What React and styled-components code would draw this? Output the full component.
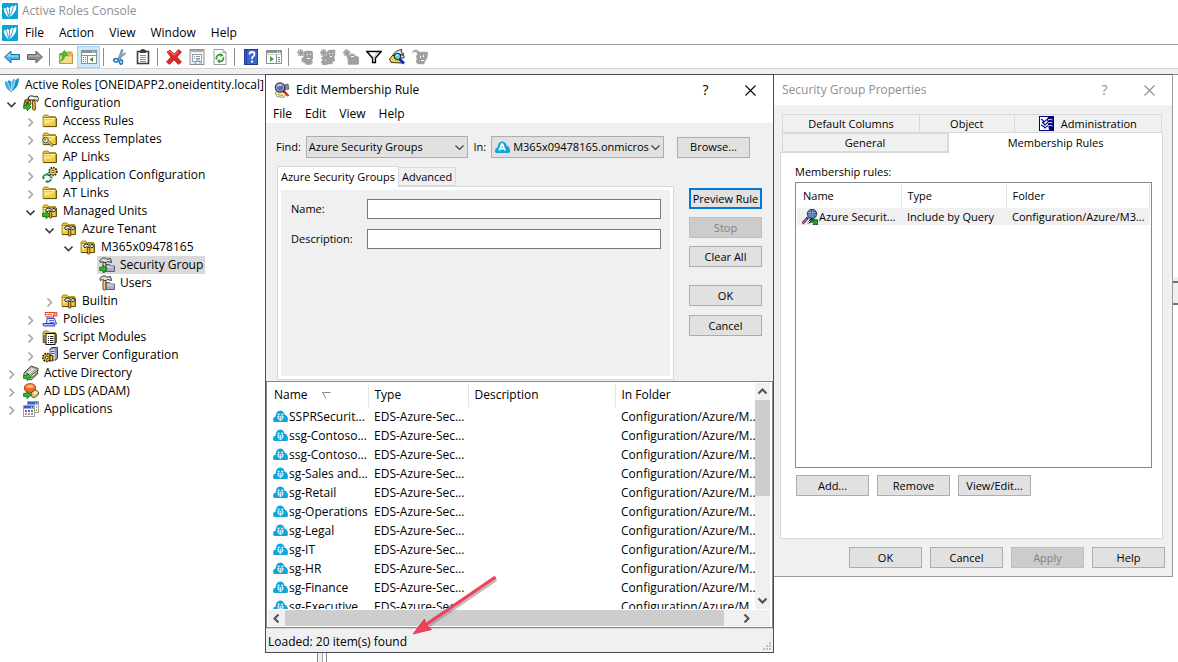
import React from "react";
import styled, { createGlobalStyle, css } from "styled-components";

const Global = createGlobalStyle`
  * { box-sizing: border-box; }
  html, body { margin: 0; padding: 0; }
  body { background: #fff; color: #000; font-family: "Open Sans", "Noto Sans", sans-serif; font-size: 12px; line-height: 16px; }
  svg { display: block; flex: none; }
`;

const uiFont = css`
  font-family: "Open Sans", "Noto Sans", sans-serif;
  font-size: 12px;
  line-height: 16px;
`;
const dialogFont = css`
  font-family: "Open Sans", "Noto Sans", sans-serif;
  font-size: 11px;
  line-height: 16px;
`;

/* ---------- icons ---------- */

const Icon = ({ w = 16, h = 16, children, box }) => (
  <svg width={w} height={h} viewBox={box || `0 0 ${w} ${h}`} aria-hidden="true">
    {children}
  </svg>
);

const AppLogo = () => (
  <Icon>
    <rect width="16" height="16" rx="1" fill="#08a4d8" />
    <path d="M1.800 5 L4 5.500 L5.500 3.800 L7.500 5.500 L10.200 2.600 L11.200 3.800 L14.400 1.800 Q15 10 6.800 14.500 Q1.800 11 1.800 5 Z" fill="#fff" />
    <path d="M4 5.500 Q5.500 8 6.500 13.500 M7.600 5.500 Q7.800 9 6.800 13.500 M11.200 3.800 Q10.500 9 7 14" fill="none" stroke="#08a4d8" strokeWidth="0.900" />
  </Icon>
);

const RootIcon = () => (
  <Icon>
    <path d="M1 4.500 L3.500 5 L4.800 3 L7.300 5 L10 2 L11.200 3.300 L15 1 Q15.500 10 7 15 Q1 11.500 1 4.500 Z" fill="#1b90c8" />
    <path d="M1 4.500 L3.500 5 Q5.500 8 6.500 14.500 Q1.200 10.500 1 4.500 Z" fill="#3fb0df" />
    <path d="M7.500 5 L10 2 L11.200 3.300 Q10.500 9 7 14 Z" fill="#5cc0e6" />
    <path d="M3.500 5 Q5.500 8 6.700 14 M7.400 5 Q7.700 9 6.900 14 M11.200 3.300 Q10.500 9 7.200 14" fill="none" stroke="#d8f1fa" strokeWidth="0.700" />
  </Icon>
);

const BackArrow = () => (
  <Icon>
    <path d="M0.500 8 L7 2 V5.500 H15.500 V10.500 H7 V14 Z" fill="#4cb2ea" stroke="#1d6fa8" />
    <path d="M2.500 7.600 L6.300 4 V6.500 H14.500 V7.800 Z" fill="#9bdaf8" />
  </Icon>
);
const ForwardArrow = () => (
  <Icon>
    <path d="M15.500 8 L9 2 V5.500 H0.500 V10.500 H9 V14 Z" fill="#8d8d8d" stroke="#646464" />
    <path d="M1.500 6.500 H10 V4.500 L13.500 7.700 H1.500 Z" fill="#b3b3b3" />
  </Icon>
);
const UpFolder = () => (
  <Icon>
    <path d="M1.500 4.500 H8 L9 3 H13.500 L14.500 4.500 V14.500 H1.500 Z" fill="#e0b955" stroke="#c0973a" />
    <path d="M2 7.500 H14 V14 H2 Z" fill="#f3d98a" />
    <path d="M2.200 12.500 Q6.500 11 7 6.500 H9.800 L6.500 1.200 L2.500 5.800 H4.800 Q5 9.500 2.200 12.500 Z" fill="#45c232" stroke="#2a8a20" strokeWidth="0.500" />
  </Icon>
);
const TreeToggle = () => (
  <Icon>
    <rect x="0.500" y="1.500" width="15" height="13" fill="#fff" stroke="#8b9097" />
    <rect x="1" y="2" width="14" height="2" fill="#8b9097" />
    <path d="M11 3 H14" stroke="#fff" strokeDasharray="1 1" />
    <path d="M1 6.500 H15" stroke="#8b9097" />
    <path d="M2 8.500 H5 M2 10.500 H5 M2 12.500 H5" stroke="#4f7fb5" strokeDasharray="1 1" />
    <path d="M6.500 7 V14" stroke="#8b9097" />
    <path d="M12 8 V13 L8.500 10.500 Z" fill="#2f9e3a" />
  </Icon>
);
const PaneToggle = () => (
  <Icon>
    <rect x="0.500" y="1.500" width="15" height="13" fill="#fff" stroke="#8b9097" />
    <rect x="1" y="2" width="14" height="2" fill="#8b9097" />
    <path d="M11 3 H14" stroke="#fff" strokeDasharray="1 1" />
    <path d="M1 5.500 H15" stroke="#c6c9cd" />
    <path d="M10.500 6 V14" stroke="#8b9097" />
    <path d="M12 8.500 H14 M12 10.500 H14 M12 12.500 H14" stroke="#4f7fb5" />
    <path d="M4 7 V13 L8 10 Z" fill="#3fae35" />
  </Icon>
);
const Scissors = () => (
  <Icon>
    <path d="M9.500 0.500 L11 1 L8.500 10 L6.500 9 Z" fill="#8fb0c8" stroke="#4f6f88" strokeWidth="0.600" />
    <path d="M13.500 4 L6 10" stroke="#7f9db4" strokeWidth="1.800" />
    <ellipse cx="4" cy="11.300" rx="2.200" ry="1.700" fill="none" stroke="#1f7fd0" strokeWidth="1.700" />
    <ellipse cx="9" cy="13" rx="1.500" ry="2.200" fill="none" stroke="#1f7fd0" strokeWidth="1.700" />
  </Icon>
);
const Clipboard = () => (
  <Icon>
    <rect x="2.500" y="2.500" width="11" height="12" fill="#fff" stroke="#3f3f3f" strokeWidth="1.600" />
    <rect x="5" y="1" width="6" height="3" fill="#3f3f3f" />
    <rect x="6.500" y="0" width="3" height="2" fill="#3f3f3f" />
    <path d="M5 6.500 H11 M5 8.500 H11 M5 10.500 H11 M5 12.500 H11" stroke="#8d8d8d" />
  </Icon>
);
const DeleteX = () => (
  <Icon>
    <path d="M1 3 L4 1 L8 5 L12.500 0.500 L15.500 3 L11 8 L15.500 13 L12.500 15.500 L8 11 L3.500 15.500 L0.500 13 L5 8 Z" fill="#dc2a2a" stroke="#a51616" strokeWidth="0.700" />
    <path d="M2.500 3 L4 2.300 L8 6.300 L12.500 2" stroke="#f38a80" fill="none" />
  </Icon>
);
const Properties = () => (
  <Icon>
    <rect x="1" y="0.500" width="14" height="15" fill="#f1f3f5" stroke="#8b9097" />
    <rect x="1.500" y="1" width="13" height="2" fill="#a9adb2" />
    <rect x="3.500" y="5.500" width="9" height="7" fill="#fff" stroke="#9aa0a8" />
    <path d="M5 7.500 H6 M5 9.500 H6 M7 7.500 H11 M7 9.500 H11 M7 11 H11" stroke="#7f93a8" />
    <path d="M5 14 H8 M10 14 H13" stroke="#7ba6cf" />
  </Icon>
);
const Refresh = () => (
  <Icon>
    <path d="M2 0.500 H11 L14 3.500 V15.500 H2 Z" fill="#fff" stroke="#9b9b9b" />
    <path d="M11 0.500 V3.500 H14" fill="none" stroke="#9b9b9b" />
    <path d="M4.800 10.500 A3.400 3.400 0 0 1 9 5.800" fill="none" stroke="#35a52d" strokeWidth="1.800" />
    <path d="M8.500 3.500 L11.500 6.500 L8 8 Z" fill="#35a52d" />
    <path d="M11.300 8 A3.400 3.400 0 0 1 7.200 12.300" fill="none" stroke="#35a52d" strokeWidth="1.800" />
    <path d="M8 10 L4.800 12 L8 14.500 Z" fill="#35a52d" />
  </Icon>
);
const HelpBook = () => (
  <Icon>
    <rect x="1.500" y="0.500" width="13" height="15" fill="#3b67cf" stroke="#1d3e96" />
    <path d="M3.500 1 V15" stroke="#1d3e96" />
    <path d="M6.500 5.500 Q6.500 3 9 3 Q11.500 3 11.500 5.200 Q11.500 6.700 10 7.600 Q9 8.200 9 10" fill="none" stroke="#fff" strokeWidth="1.800" />
    <rect x="8" y="11.500" width="2" height="2" fill="#fff" />
  </Icon>
);
const GhostStar = () => (
  <path d="M3 0 H4 V2 L6 1 L5.500 3 L7.500 3 V4 H6 V5 L7 7 L5 6 L4 7 H3 V5.500 L1 7 L2 4.500 L0 4 V3 H2 L1 1 L3 2 Z" />
);
const GhostUser = ({ kind }) => (
  <Icon>
    <g fill="#a0a0a0" stroke="#a0a0a0" strokeWidth="0.500">
      {kind !== "edit" && <GhostStar />}
      {kind === "user" && <path d="M7 4 L8 2 H15 L16 4 V10 L14 11 L16 13 L14 15.500 H9 L7 13 H5 V9 L7 8 Z" />}
      {kind === "group" && <path d="M7 3 L9 1 H15 L15 6 L14 8 L15 12 L13 12 L12 15 H8 L6 16 H3 L1 13 L3 11 L1 9 L4 7 L7 7 Z" />}
      {kind === "folder" && <path d="M4 7 L7 6 L8 5 H11 L12 7 H14 L16 9 V15 L14 15.500 H5 V12 Z" />}
      {kind === "edit" && <path d="M4 7 L8 3 H15 L16 4 L15 9 L13 12 L12 15 H6 L4 13 L5 10 Z M1 3 L2 1 H5 V2 H7 V5 H5 L5 3 H3 L2 2 L1 4 H0 Z" />}
    </g>
    <g fill="#fff">
      {kind === "user" && <path d="M10 5 H11 V6 H10 Z M13 5 H14 V6 H13 Z M10 9 H13 V10 H10 Z" />}
      {kind === "group" && <path d="M9 4 H10 V5 H9 Z M12 4 H13 V5 H12 Z M5 11 H6 V12 H5 Z M10 7 H12 V8 H10 Z" />}
      {kind === "folder" && <path d="M8 7 H11 V8 H8 Z" />}
      {kind === "edit" && <path d="M8 7 H9 V9 H8 Z M11 6 H12 V8 H11 Z M9 11 H12 V12 H9 Z" />}
    </g>
  </Icon>
);
const Funnel = () => (
  <Icon>
    <path d="M0.700 2.500 H15.300 L9.500 9 V13.500 L6.500 13.500 V9 Z" fill="#d8d8d8" stroke="#000" strokeWidth="1.300" />
    <path d="M3 3.500 H10 L7.500 7.500 Z" fill="#fff" />
  </Icon>
);
const FindIcon = () => (
  <Icon>
    <path d="M0.500 10 L4 6 L12 10 L13 14 L2 13.500 Z" fill="#e8d43c" stroke="#222" strokeWidth="0.900" />
    <path d="M4 6 Q6 1.500 13 0.500 L12 3 L15 5 L11 5.500 L15 6.500 V9 L9 9 Z" fill="#e8e8e8" stroke="#222" strokeWidth="0.900" />
    <circle cx="8.500" cy="7.500" r="3.200" fill="#58d7dc" stroke="#111" />
    <path d="M10.500 10 L15 14.500" stroke="#1822c8" strokeWidth="2.600" />
    <path d="M7 6.800 L9 5.800" stroke="#fff" />
  </Icon>
);
const QueryIcon = () => (
  <Icon>
    <path d="M1 11 L6 8 L13 11 L10 15.500 L3 14.500 Z" fill="#f4eda0" stroke="#77736a" strokeWidth="0.700" />
    <path d="M4 12.500 L9 13.500" stroke="#a29a60" />
    <path d="M10 3 L14 2 L15 7 L11 8 Z" fill="#8b8b95" stroke="#444" strokeWidth="0.600" />
    <circle cx="6" cy="5.500" r="4.600" fill="#b4bfe4" stroke="#2d3159" strokeWidth="1.300" />
    <circle cx="6" cy="5.800" r="3" fill="#5c6aa6" />
    <path d="M4 4.500 Q5 3 7 3.300" stroke="#fff" fill="none" />
    <path d="M9.500 9 L14.500 14" stroke="#c93028" strokeWidth="2.400" />
    <path d="M9 8.500 L10.500 10" stroke="#333" strokeWidth="2" />
  </Icon>
);
const RuleIcon = () => (
  <Icon>
    <path d="M0.500 14.500 L6 8.500" stroke="#3a2f6a" strokeWidth="2.600" />
    <path d="M0.800 14.200 L5 9.800" stroke="#f2744e" strokeWidth="1.100" />
    <circle cx="10" cy="5" r="4.700" fill="#3c6ea5" stroke="#12306a" />
    <path d="M6 3.500 H14 M5.500 6 H14.500 M8 1 V9 M11 1 V9" stroke="#cfe3f2" strokeWidth="0.700" strokeDasharray="1 1" />
    <path d="M5 15 L8 10 H11 L13 12" fill="#0a0a0a" />
    <path d="M5.500 14.500 L8.500 11.500 L10 13" fill="none" stroke="#fff" />
    <path d="M9 10 L12 11.500 V10.500 L16 11 V16 H11 L12 14 L9 12.500 Z" fill="#0fae2a" stroke="#06380d" strokeWidth="0.700" />
  </Icon>
);

const GreenArrow = () => (
  <path d="M0.600 10.300 H4 V8 L8.200 12 L4 15.700 V13.600 H0.600 Z" fill="#1fc21f" stroke="#0a5a0a" strokeWidth="0.700" />
);
const FolderBase = () => (
  <>
    <path d="M1 3.500 L2 2 H6 L7 3.500 H13.500 V5 H1 Z" fill="#e8c83c" stroke="#9a7a14" strokeWidth="0.800" />
    <path d="M1 4.500 H14 V13.500 H1 Z" fill="#efce42" stroke="#9a7a14" strokeWidth="0.800" />
    <path d="M1.800 5.500 H13.200" stroke="#fff3a8" />
    <path d="M2 7 Q8 8 12 5.800 V7.500 Q8 10.500 2 10.500 Z" fill="#f9e67e" />
    <path d="M1.500 13.600 H14.400 V5" fill="none" stroke="#5f4a08" />
  </>
);
const HammerGlyph = () => (
  <>
    <path d="M3.500 7 Q4.500 4.500 7 5 L8 6 H11 L12.500 5 L13.500 7.500 L12 9 L10.500 8 H6.500 L5 9 Z" fill="#e4e4e4" stroke="#111" strokeWidth="0.900" />
    <path d="M7.300 8.500 H9.800 V14.500 Q8.600 16 7.300 14.500 Z" fill="#f6b21c" stroke="#3b2500" strokeWidth="0.800" />
  </>
);
const FolderIcon = () => <Icon><FolderBase /></Icon>;
const FolderKey = () => (
  <Icon>
    <FolderBase />
    <circle cx="3.500" cy="9" r="2.800" fill="#f3e9a8" stroke="#57503a" />
    <circle cx="3" cy="8.500" r="0.900" fill="#57503a" />
    <path d="M5.500 10.500 L11 15" stroke="#57503a" strokeWidth="2.600" />
    <path d="M5.500 10.500 L10.600 14.600" stroke="#e8dea0" strokeWidth="1.200" />
  </Icon>
);
const FolderTool = () => <Icon><FolderBase /><HammerGlyph /></Icon>;
const FolderToolArrow = () => <Icon><FolderBase /><HammerGlyph /><GreenArrow /></Icon>;
const ConfigIcon = () => (
  <Icon>
    <path d="M1 9 L2 5 L7 3.500 L8 9 L5 12 L1.500 11 Z" fill="#c9a42c" stroke="#3d3108" strokeWidth="0.900" />
    <path d="M2.500 6.500 L6 9 M6 5 L3.500 9.500" stroke="#3d3108" />
    <path d="M5 2.500 Q7 0 10 1 L12 2 L14 1 L15.500 3.500 L14.500 6.500 L12.500 5 H8.500 L6 5 Z" fill="#f2f2f2" stroke="#111" strokeWidth="0.900" />
    <path d="M9.500 5.500 H12 L12.500 14.500 Q11 16 9.700 14.500 Z" fill="#f8b824" stroke="#3b2500" strokeWidth="0.800" />
    <GreenArrow />
  </Icon>
);
const AppConfigIcon = () => (
  <Icon>
    <circle cx="11" cy="4.500" r="3.800" fill="#f1cf54" stroke="#222" strokeWidth="1.800" strokeDasharray="1.500 1" />
    <circle cx="11" cy="4.500" r="1.200" fill="#fff" stroke="#222" strokeWidth="0.700" />
    <path d="M5 7 L8 9" stroke="#222" strokeWidth="1.400" />
    <path d="M1 11 A4 4 0 0 1 5 7.500 M9 12 A4 4 0 0 1 4.500 14.800" fill="none" stroke="#1e8f4b" strokeWidth="1.600" />
    <path d="M0 10 L3 10 L1.500 13 Z M7.500 11 L11 11.500 L9 8.500 Z M4.500 5.500 L7.500 7.500 L4.500 9 Z M5.500 12.800 L3 14.500 L5.500 16 Z" fill="#1e8f4b" />
  </Icon>
);
const ToolGroup = ({ arrow }) => (
  <Icon>
    <path d="M7 7.500 H10.500 L11.500 9 H15.500 V14.500 H7 Z" fill="#a9b0c6" stroke="#4f566b" strokeWidth="0.900" />
    <path d="M8 10 H14.500" stroke="#e8ebf4" />
    <path d="M0.800 3.500 Q3 0 6.500 1 L8 2.200 L11.500 1.500 L12.500 5.500 L8.500 4.500 L6.500 6 L3.500 4.500 L1.500 5.500 Z" fill="#dcdcdc" stroke="#222" strokeWidth="0.900" />
    <path d="M4 5.500 H6.800 V14.500 Q5.400 15.800 4 14.500 Z" fill={arrow ? "#d0d0d0" : "#f8d060"} stroke="#3b2a10" strokeWidth="0.800" />
    {arrow && <GreenArrow />}
  </Icon>
);
const ToolGroupArrow = () => <ToolGroup arrow />;
const PolicyIcon = () => (
  <Icon>
    <path d="M3 1.500 H12 L13 3 L11.500 4 V7 H5 L3.500 4.500 Z" fill="#fde6dc" stroke="#e5482c" />
    <path d="M12 1.500 H15 V5 H12 Z" fill="#f7a586" stroke="#e5482c" strokeWidth="0.900" />
    <path d="M4.500 3.500 H10 M5 5.500 H10.500" stroke="#e5482c" strokeWidth="0.800" />
    <path d="M5 7.500 H12.500 L14.500 13 H4.500 Z" fill="#e6ebff" stroke="#3948b8" />
    <path d="M7 9.500 H12 M7.500 11.500 H12.500" stroke="#5c6bd3" />
    <path d="M1 12.500 H11.500 L13 15 H2.500 Q0.500 15 1 12.500 Z" fill="#aebaf4" stroke="#3948b8" />
  </Icon>
);
const ScriptIcon = () => (
  <Icon>
    <FolderBase />
    <rect x="4" y="4.500" width="9" height="11" fill="#fff" stroke="#111" />
    <path d="M6 7.500 H7 M8 7.500 H11.500 M6 9.500 H7 M8 9.500 H11.500 M6 11.500 H7 M8 11.500 H11.500 M6 13.500 H7 M8 13.500 H11.500" stroke="#222" />
    <path d="M2 6 V13" stroke="#222" />
  </Icon>
);
const ServerIcon = () => (
  <Icon>
    <path d="M8 2 L10 0.500 H15.500 V11.500 L14 13 H8 Z" fill="#9097b5" stroke="#2b2e45" strokeWidth="0.900" />
    <path d="M8.500 2.500 H13 V12.500 H8.500 Z" fill="#d7daea" />
    <path d="M9 4.500 H12.500 M9 6.500 H12.500" stroke="#4b5070" />
    <circle cx="4.800" cy="10.500" r="3.900" fill="#f0c838" stroke="#1b1600" strokeWidth="1.800" strokeDasharray="1.600 1" />
    <circle cx="4.800" cy="10.500" r="1.500" fill="#fff" stroke="#1b1600" strokeWidth="0.900" />
    <path d="M8 8 L11 9 L10.500 14 H8 Z" fill="#f0c838" stroke="#1b1600" strokeWidth="0.900" />
  </Icon>
);
const DirectoryIcon = () => (
  <Icon>
    <path d="M1 8 L8 1 L15 3.500 V6 L14 7 L15 8.500 L8 15 L1 12 Z" fill="#d4d6cc" stroke="#30342a" strokeWidth="0.900" />
    <path d="M2.500 7.700 L8.500 2.200 L13.500 4 L7.500 9.500 Z" fill="#f4f4ee" stroke="#666b5c" strokeWidth="0.700" />
    <path d="M4.500 7 L9.500 3.500 M6.500 8 L11.500 4.500" stroke="#9a9d92" strokeWidth="0.800" />
    <path d="M8 10.500 L15 5 M8 13 L15 7.500" stroke="#30342a" strokeWidth="0.800" />
    <path d="M10 11 L13.500 8" stroke="#d7bf3c" />
    <GreenArrow />
  </Icon>
);
const LdsIcon = () => (
  <Icon>
    <path d="M1.500 3 L5 0.700 H9.500 L12.500 3 V7 L9.500 10 H4.500 L1.500 7 Z" fill="#f26a2a" stroke="#a83a0c" strokeWidth="0.800" />
    <path d="M2.500 3.500 L6 1.700 H9 L11.500 3.500 L9 5 H5 Z" fill="#fbb68a" />
    <path d="M8 10 L12 6.500 L15.500 9 V11.500 L11 15 L8 13 Z" fill="#dcc25a" stroke="#3d3108" strokeWidth="0.800" />
    <path d="M10 10 L12.500 8 L14.500 9.300 L11.500 12 Z" fill="#f3f0e0" />
    <GreenArrow />
  </Icon>
);
const AppsIcon = () => (
  <Icon>
    <rect x="4.500" y="0.500" width="11" height="11" fill="#fff" stroke="#a0a0a0" />
    <rect x="5" y="1" width="10" height="2.500" fill="#3a5ad0" />
    <path d="M12 2.200 H13 M14 2.200 H15" stroke="#fff" />
    <rect x="0.500" y="4.500" width="11" height="11" fill="#fff" stroke="#a0a0a0" />
    <rect x="1" y="5" width="10" height="2.500" fill="#3a5ad0" />
    <path d="M8 6.200 H9 M10 6.200 H11" stroke="#fff" />
    <rect x="2" y="9" width="2" height="2" fill="#d34a3a" />
    <rect x="5" y="9" width="2" height="2" fill="#4b68d8" />
    <rect x="8" y="9" width="2" height="2" fill="#48a04c" />
    <rect x="2" y="12" width="2" height="2" fill="#9a9a9a" />
    <rect x="5" y="12" width="2" height="2" fill="#9a9a9a" />
    <rect x="8" y="12" width="2" height="2" fill="#9a9a9a" />
    <path d="M13.500 5 V10" stroke="#c7a33c" strokeDasharray="2 1" />
  </Icon>
);
const CloudPath = () => (
  <path d="M1.500 12 Q0 12 0 9.800 Q0 7.200 2.600 6.600 Q3 0.500 7.200 0.500 Q10.500 0.500 11.600 4.500 Q14.600 5.500 14.900 8.500 V10.500 Q14.900 12 13.500 12 Z" fill="#0ba6dc" />
);
const CloudGroupIcon = () => (
  <Icon w={15} h={13}>
    <CloudPath />
    <g fill="#d9f3fc">
      <circle cx="5.600" cy="4.500" r="1.100" />
      <circle cx="9.200" cy="4.500" r="1.100" />
      <path d="M4.300 6 H6 V9.500 H5 Z M8.900 6 H10.600 L10 9.500 H8.900 Z" />
      <circle cx="7.450" cy="6.700" r="1" />
      <path d="M6.300 8 H8.600 L8.300 11 H6.600 Z" />
    </g>
  </Icon>
);
const CloudTenantIcon = () => (
  <Icon w={15} h={13}>
    <CloudPath />
    <path d="M4.200 9.500 L6.700 3.200 H7.500 L10 9.500 M5.300 7.600 H8.900" fill="none" stroke="#fff" strokeWidth="1.700" />
  </Icon>
);
const AdminTabIcon = () => (
  <Icon w={15} h={15}>
    <rect width="15" height="15" fill="#000080" />
    <path d="M1 1 H9 L8 3 L10 14 H1 Z" fill="#fff" />
    <path d="M2 3 Q4 4 5 6 Q8 2 13 4 M3 6 Q5 7 6 9 Q9 5 13 7 M2 9 Q5 10 6 12 Q9 8 13 10" fill="none" stroke="#000080" strokeWidth="1.100" />
    <path d="M9 4 Q11 2.500 13.500 4 M9 7 Q11 5.500 13.500 7 M9 10 Q11 8.500 13.500 10" fill="none" stroke="#fff" strokeWidth="0.900" />
  </Icon>
);
const Chevron = ({ dir = "down", color = "#404040", size = 9, thick = 2 }) => {
  const d = {
    down: "M0.500 2.500 L4.500 6.500 L8.500 2.500",
    up: "M0.500 6.500 L4.500 2.500 L8.500 6.500",
    right: "M2.500 0.500 L6.500 4.500 L2.500 8.500",
    left: "M6.500 0.500 L2.500 4.500 L6.500 8.500",
  }[dir];
  return (
    <Icon w={size} h={size} box="0 0 9 9">
      <path d={d} fill="none" stroke={color} strokeWidth={thick} />
    </Icon>
  );
};
const CrossIcon = () => (
  <Icon w={11} h={11}>
    <path d="M0.500 0.500 L10.500 10.500 M10.500 0.500 L0.500 10.500" stroke="currentColor" strokeWidth="1.100" />
  </Icon>
);

/* ---------- console window ---------- */

const Desktop = styled.div`
  position: relative;
  display: flex;
  flex-direction: column;
  min-height: 100vh;
  overflow: hidden;
  background: #fff;
`;
const ConsoleTitle = styled.header`
  display: flex;
  align-items: center;
  gap: 4px;
  height: 22px;
  padding-left: 2px;
  color: #8f8f8f;
`;
const MenuBar = styled.nav`
  display: flex;
  align-items: center;
  gap: ${(p) => p.$gap}px;
  height: ${(p) => p.$height}px;
  padding-left: ${(p) => p.$inset}px;
`;
const MenuButton = styled.button`
  ${uiFont}
  border: 0;
  padding: 0;
  background: none;
  color: #000;
`;
const MenuLogo = styled.span`
  margin-right: -8px;
`;
const ToolBar = styled.div`
  display: flex;
  align-items: center;
  height: 24px;
  border-top: 1px solid #9d9d9d;
  background: #fff;
`;
const ToolButton = styled.button`
  display: flex;
  align-items: center;
  justify-content: center;
  width: 23px;
  height: 22px;
  padding: 0;
  border: 1px solid ${(p) => (p.$active ? "#99d1ff" : "transparent")};
  background: ${(p) => (p.$active ? "#cce8ff" : "transparent")};
`;
const ToolDivider = styled.span`
  width: 1px;
  height: 18px;
  margin: 0 4px 0 3px;
  background: #8d8d8d;
`;
const ToolEdge = styled.div`
  height: 6px;
  border-top: 1px solid #d5d5d5;
  background: #f0f0f0;
`;
const Workspace = styled.main`
  display: flex;
  flex: 1;
`;
const TreePane = styled.ul`
  width: 318px;
  margin: 0;
  padding: 1px 0 0;
  list-style: none;
  border-top: 1px solid #828790;
  border-right: 1px solid #828790;
`;
const TreeRow = styled.li`
  display: flex;
  align-items: center;
  height: 18px;
  padding-left: ${(p) => 2 + 19 * Math.max(0, p.$depth - 1)}px;
`;
const TreeSlot = styled.span`
  display: flex;
  align-items: center;
  justify-content: center;
  width: 19px;
  padding-top: 2px;
`;
const TreeItem = styled.span`
  display: flex;
  align-items: center;
  gap: 5px;
  height: 18px;
  padding: 0 2px;
  white-space: nowrap;
  background: ${(p) => (p.$selected ? "#d9d9d9" : "transparent")};
`;
const Splitter = styled.div`
  width: 5px;
  background: #f0f0f0;
  border-right: 1px solid #a8a8a8;
`;
const ResultPane = styled.section`
  flex: 1;
  display: flex;
  flex-direction: column;
  margin-left: 3px;
  border-top: 1px solid #828790;
  border-left: 1px solid #828790;
`;
const ResultTop = styled.div`
  height: 202px;
`;
const ResultBand = styled.div`
  height: 28px;
  border-top: 4px solid #f0f0f0;
  border-bottom: 2px solid #6f7278;
  background: #f0f0f0;
  box-shadow: inset 0 2px #6f7278;
`;

/* ---------- dialogs ---------- */

const RuleWindow = styled.section`
  position: absolute;
  top: 74px;
  left: 265px;
  right: 404px;
  z-index: 2;
  display: flex;
  flex-direction: column;
  height: 579px;
  border: 1px solid #4b4d52;
  background: #f0f0f0;
`;
const PropsWindow = styled.section`
  position: absolute;
  top: 74px;
  right: 5px;
  width: 400px;
  z-index: 1;
  display: flex;
  flex-direction: column;
  border: 1px solid #9a9a9a;
  border-top-color: #5b5b5f;
  background: #f0f0f0;
`;
const WindowTitle = styled.header`
  display: flex;
  align-items: center;
  gap: 6px;
  height: 30px;
  padding: 0 3px 0 8px;
  background: #fff;
  color: ${(p) => (p.$inactive ? "#8f8f8f" : "#000")};
`;
const TitleText = styled.h1`
  flex: 1;
  margin: 0;
  font-size: 12px;
  font-weight: 400;
  line-height: 16px;
`;
const TitleButton = styled.button`
  ${uiFont}
  display: flex;
  align-items: center;
  justify-content: center;
  width: 39px;
  height: 28px;
  padding: 0;
  border: 0;
  background: none;
  font-size: 14px;
  color: inherit;
`;
const WhiteStrip = styled.div`
  background: #fff;
`;
const FindRow = styled.div`
  ${dialogFont}
  display: flex;
  align-items: center;
  gap: 5px;
  padding: 13px 23px 0 10px;
`;
const FieldLabel = styled.label`
  ${dialogFont}
  flex: none;
  width: ${(p) => (p.$width ? `${p.$width}px` : "auto")};
  white-space: nowrap;
`;
const SelectBox = styled.span`
  display: grid;
  align-items: center;
  flex: ${(p) => p.$grow} 1 0;
  min-width: 0;
  > * { grid-area: 1 / 1; }
  > svg:last-child { justify-self: end; margin-right: 4px; pointer-events: none; }
`;
const SelectIcon = styled.span`
  z-index: 1;
  margin-left: 4px;
  pointer-events: none;
`;
const Select = styled.select`
  ${dialogFont}
  appearance: none;
  width: 100%;
  height: 22px;
  padding: 0 14px 0 ${(p) => p.$inset}px;
  border: 1px solid #adadad;
  border-radius: 0;
  background: #e1e1e1;
  color: #000;
`;
const PushButton = styled.button`
  ${dialogFont}
  flex: none;
  width: 73px;
  height: 21px;
  padding: 0;
  border: ${(p) => (p.$default ? "2px solid #0078d7" : "1px solid #adadad")};
  background: #e1e1e1;
  color: #000;
  white-space: nowrap;
  &:disabled { background: #cccccc; border-color: #bfbfbf; color: #838383; }
`;
const BrowseSpace = styled.span`
  margin-left: 8px;
`;
const QueryArea = styled.div`
  display: flex;
  gap: 15px;
  padding: 8px 11px 1px 11px;
`;
const QueryTabs = styled.div`
  flex: 1;
  display: flex;
  flex-direction: column;
  min-width: 0;
`;
const TabStrip = styled.div`
  display: flex;
  align-items: flex-end;
`;
const Tab = styled.button`
  ${dialogFont}
  display: flex;
  align-items: center;
  justify-content: center;
  gap: 7px;
  flex: ${(p) => p.$flex || "none"};
  height: ${(p) => (p.$active ? 21 : 19)}px;
  margin-bottom: ${(p) => (p.$active ? "-1px" : "0")};
  padding: 0 3px;
  border: 1px solid #d9d9d9;
  border-bottom-width: ${(p) => (p.$active ? 0 : 1)}px;
  border-left-width: ${(p) => (p.$joined ? 0 : 1)}px;
  background: ${(p) => (p.$active ? "#fff" : "#f0f0f0")};
  color: #000;
  white-space: nowrap;
  z-index: ${(p) => (p.$active ? 1 : 0)};
`;
const QueryPanel = styled.div`
  display: flex;
  flex-direction: column;
  gap: 10px;
  height: 194px;
  padding: 12px 9px 0;
  border: 1px solid #d9d9d9;
  background: #f0f0f0;
  box-shadow: inset 0 0 0 3px #fff;
`;
const FormRow = styled.div`
  display: flex;
  align-items: center;
  padding: 0 3px 0 4px;
`;
const TextInput = styled.input`
  ${dialogFont}
  flex: 1;
  min-width: 0;
  height: 20px;
  padding: 0 4px;
  border: 1px solid #7a7a7a;
  background: #fff;
`;
const ActionColumn = styled.div`
  display: flex;
  flex-direction: column;
  gap: 8px;
  padding-top: 22px;
`;
const ActionPair = styled.div`
  display: flex;
  flex-direction: column;
  gap: 9px;
  margin-top: 10px;
`;

const ResultFrame = styled.div`
  display: grid;
  grid-template-columns: minmax(0, 1fr) 15px;
  grid-template-rows: minmax(0, 1fr) 17px;
  flex: 1;
  min-height: 0;
  padding: 1px 2px 1px 1px;
  border: 1px solid #828790;
  background: #fff;
`;
const ListClip = styled.div`
  overflow: hidden;
`;
const DataTable = styled.table`
  width: 100%;
  border-collapse: collapse;
  border-spacing: 0;
  table-layout: fixed;
`;
const HeadCell = styled.th`
  ${(p) => (p.$small ? dialogFont : uiFont)}
  height: 24px;
  width: ${(p) => (p.$width ? `${p.$width}px` : "auto")};
  padding: 0 0 0 6px;
  border-right: ${(p) => (p.$last ? "0" : "1px solid #e5e5e5")};
  font-weight: 400;
  text-align: left;
  white-space: nowrap;
`;
const HeadLabel = styled.span`
  display: flex;
  align-items: center;
  gap: 14px;
`;
const Cell = styled.td`
  ${(p) => (p.$small ? dialogFont : uiFont)}
  height: ${(p) => (p.$small ? 17 : 19)}px;
  padding: 0 0 0 6px;
  overflow: hidden;
  white-space: nowrap;
  background: ${(p) => (p.$shade ? "#f0f0f0" : "transparent")};
`;
const CellName = styled.span`
  display: flex;
  align-items: center;
  gap: 1px;
  margin-left: -1px;
`;
const ScrollRail = styled.div`
  display: flex;
  flex-direction: ${(p) => (p.$vertical ? "column" : "row")};
  background: #f0f0f0;
  ${(p) => !p.$vertical && css`
    margin-top: 1px;
    grid-column: 1;
  `}
`;
const RailArrow = styled.span`
  display: flex;
  align-items: center;
  justify-content: center;
  flex: none;
  width: ${(p) => (p.$wide ? 17 : 15)}px;
  height: ${(p) => (p.$wide ? 16 : 17)}px;
`;
const RailTrack = styled.span`
  display: flex;
  flex-direction: inherit;
  flex: 1;
`;
const RailThumb = styled.span`
  flex: 0 0 ${(p) => p.$share}%;
  background: #cdcdcd;
`;
const RailCorner = styled.span`
  margin-top: 1px;
  background: #f0f0f0;
`;
const StatusBar = styled.footer`
  display: flex;
  align-items: flex-end;
  justify-content: space-between;
  height: 24px;
  padding: 0 2px 2px;
  border-top: 1px solid #d7d7d7;
`;
const Pointer = styled.div`
  position: absolute;
  left: 143px;
  bottom: 14px;
`;

const PropTabs = styled.div`
  display: flex;
  flex-direction: column;
  padding: 9px 9px 0 6px;
`;
const TabRow = styled.div`
  display: flex;
  align-items: flex-end;
  padding: 0 ${(p) => (p.$front ? 0 : 1)}px 0 2px;
  margin-top: ${(p) => (p.$front ? "-1px" : "0")};
`;
const PropPanel = styled.div`
  height: 387px;
  padding: 11px 10px 0 14px;
  border: 1px solid #d9d9d9;
  background: #fff;
`;
const RuleList = styled.div`
  height: 286px;
  margin-top: 2px;
  padding: 1px;
  border: 1px solid #828790;
`;
const PanelLabel = styled.div`
  ${dialogFont}
`;
const ButtonRow = styled.div`
  display: flex;
  gap: 8px;
  justify-content: ${(p) => (p.$end ? "flex-end" : "flex-start")};
  padding: ${(p) => (p.$end ? "8px 7px 8px 0" : "7px 0 0 1px")};
`;

/* ---------- data ---------- */

const tree = [
  [0, "Active Roles [ONEIDAPP2.oneidentity.local]", RootIcon, ""],
  [1, "Configuration", ConfigIcon, "down"],
  [2, "Access Rules", FolderIcon, "right"],
  [2, "Access Templates", FolderKey, "right"],
  [2, "AP Links", FolderIcon, "right"],
  [2, "Application Configuration", AppConfigIcon, "right"],
  [2, "AT Links", FolderIcon, "right"],
  [2, "Managed Units", FolderToolArrow, "down"],
  [3, "Azure Tenant", FolderTool, "down"],
  [4, "M365x09478165", FolderTool, "down"],
  [5, "Security Group", ToolGroupArrow, "", true],
  [5, "Users", ToolGroup, ""],
  [3, "Builtin", FolderTool, "right"],
  [2, "Policies", PolicyIcon, "right"],
  [2, "Script Modules", ScriptIcon, "right"],
  [2, "Server Configuration", ServerIcon, "right"],
  [1, "Active Directory", DirectoryIcon, "right"],
  [1, "AD LDS (ADAM)", LdsIcon, "right"],
  [1, "Applications", AppsIcon, "right"],
];

const tools = [
  ["Back", <BackArrow />], ["Forward", <ForwardArrow />], null,
  ["Up one level", <UpFolder />], ["Console tree", <TreeToggle />, true], null,
  ["Cut", <Scissors />], ["Paste", <Clipboard />], null,
  ["Delete", <DeleteX />], ["Properties", <Properties />], ["Refresh", <Refresh />], null,
  ["Help", <HelpBook />], ["Action pane", <PaneToggle />], null,
  ["New user", <GhostUser kind="user" />], ["New group", <GhostUser kind="group" />],
  ["New unit", <GhostUser kind="folder" />], ["Filter", <Funnel />],
  ["Find", <FindIcon />], ["Modify", <GhostUser kind="edit" />],
];

const groups = [
  "SSPRSecurit...", "ssg-Contoso...", "ssg-Contoso...", "sg-Sales and...", "sg-Retail",
  "sg-Operations", "sg-Legal", "sg-IT", "sg-HR", "sg-Finance", "sg-Executive",
];

/* ---------- views ---------- */

const Menu = ({ items, logo, ...bar }) => (
  <MenuBar {...bar}>
    {logo && <MenuLogo><AppLogo /></MenuLogo>}
    {items.map((m) => <MenuButton key={m}>{m}</MenuButton>)}
  </MenuBar>
);

const RuleDialog = () => (
  <RuleWindow aria-label="Edit Membership Rule">
    <WindowTitle>
      <QueryIcon />
      <TitleText>Edit Membership Rule</TitleText>
      <TitleButton>?</TitleButton>
      <TitleButton aria-label="Close"><CrossIcon /></TitleButton>
    </WindowTitle>
    <WhiteStrip>
      <Menu items={["File", "Edit", "View", "Help"]} $gap={13} $height={18} $inset={7} />
    </WhiteStrip>
    <FindRow>
      <FieldLabel htmlFor="find">Find:</FieldLabel>
      <SelectBox $grow={16}>
        <Select id="find" $inset={2}><option>Azure Security Groups</option></Select>
        <Chevron thick={1.2} />
      </SelectBox>
      <FieldLabel htmlFor="scope">In:</FieldLabel>
      <SelectBox $grow={17}>
        <SelectIcon><CloudTenantIcon /></SelectIcon>
        <Select id="scope" $inset={21}><option>M365x09478165.onmicrosoft.com</option></Select>
        <Chevron thick={1.2} />
      </SelectBox>
      <BrowseSpace><PushButton>Browse...</PushButton></BrowseSpace>
    </FindRow>
    <QueryArea>
      <QueryTabs>
        <TabStrip>
          <Tab $active>Azure Security Groups</Tab>
          <Tab $joined>Advanced</Tab>
        </TabStrip>
        <QueryPanel>
          <FormRow>
            <FieldLabel htmlFor="name" $width={76}>Name:</FieldLabel>
            <TextInput id="name" />
          </FormRow>
          <FormRow>
            <FieldLabel htmlFor="desc" $width={76}>Description:</FieldLabel>
            <TextInput id="desc" />
          </FormRow>
        </QueryPanel>
      </QueryTabs>
      <ActionColumn>
        <PushButton $default>Preview Rule</PushButton>
        <PushButton disabled>Stop</PushButton>
        <PushButton>Clear All</PushButton>
        <ActionPair>
          <PushButton>OK</PushButton>
          <PushButton>Cancel</PushButton>
        </ActionPair>
      </ActionColumn>
    </QueryArea>
    <ResultFrame>
      <ListClip>
        <DataTable>
          <thead>
            <tr>
              <HeadCell $width={100}>
                <HeadLabel>
                  Name
                  <Icon w={9} h={7}>
                    <path d="M8.500 0.500 H0.500 L4 6.500" fill="none" stroke="#8a8a8a" />
                  </Icon>
                </HeadLabel>
              </HeadCell>
              <HeadCell $width={100}>Type</HeadCell>
              <HeadCell $width={147}>Description</HeadCell>
              <HeadCell $last>In Folder</HeadCell>
            </tr>
          </thead>
          <tbody>
            {groups.map((g, i) => (
              <tr key={i}>
                <Cell><CellName><CloudGroupIcon />{g}</CellName></Cell>
                <Cell>EDS-Azure-Sec...</Cell>
                <Cell />
                <Cell>Configuration/Azure/M..</Cell>
              </tr>
            ))}
          </tbody>
        </DataTable>
      </ListClip>
      <ScrollRail $vertical>
        <RailArrow><Chevron dir="up" color="#505050" /></RailArrow>
        <RailTrack><RailThumb $share={50} /></RailTrack>
        <RailArrow><Chevron color="#505050" /></RailArrow>
      </ScrollRail>
      <ScrollRail>
        <RailArrow $wide><Chevron dir="left" color="#505050" /></RailArrow>
        <RailTrack><RailThumb $share={97} /></RailTrack>
        <RailArrow $wide><Chevron dir="right" color="#505050" /></RailArrow>
      </ScrollRail>
      <RailCorner />
    </ResultFrame>
    <StatusBar>
      <span>Loaded: 20 item(s) found</span>
      <Icon w={8} h={8}>
        <path d="M6 0 H8 V2 H6 Z M3 3 H5 V5 H3 Z M6 3 H8 V5 H6 Z M0 6 H2 V8 H0 Z M3 6 H5 V8 H3 Z M6 6 H8 V8 H6 Z" fill="#bfbfbf" />
      </Icon>
    </StatusBar>
    <Pointer>
      <Icon w={92} h={66}>
        <path d="M87.500 7.500 L20 53.500" stroke="#9a8a90" strokeOpacity="0.600" strokeWidth="3" fill="none" />
        <path d="M86.500 5 L17 52.500" stroke="#f0405c" strokeWidth="3.200" />
        <path d="M4 62 L15.500 47 L17 52 L22.500 57.500 Z" fill="#f0405c" stroke="#d83450" strokeWidth="0.800" />
      </Icon>
    </Pointer>
  </RuleWindow>
);

const PropsDialog = () => (
  <PropsWindow aria-label="Security Group Properties">
    <WindowTitle $inactive>
      <TitleText>Security Group Properties</TitleText>
      <TitleButton>?</TitleButton>
      <TitleButton aria-label="Close"><CrossIcon /></TitleButton>
    </WindowTitle>
    <PropTabs>
      <TabRow>
        <Tab $flex="138 1 0">Default Columns</Tab>
        <Tab $joined $flex="93 1 0">Object</Tab>
        <Tab $joined $flex="149 1 0"><AdminTabIcon />Administration</Tab>
      </TabRow>
      <TabRow $front>
        <Tab $flex="165 1 0">General</Tab>
        <Tab $active $flex="216 1 0">Membership Rules</Tab>
      </TabRow>
      <PropPanel>
        <PanelLabel>Membership rules:</PanelLabel>
        <RuleList>
          <DataTable>
            <thead>
              <tr>
                <HeadCell $small $width={104}>Name</HeadCell>
                <HeadCell $small $width={105}>Type</HeadCell>
                <HeadCell $small>Folder</HeadCell>
              </tr>
            </thead>
            <tbody>
              <tr>
                <Cell $small $shade><CellName><RuleIcon />Azure Securit...</CellName></Cell>
                <Cell $small $shade>Include by Query</Cell>
                <Cell $small $shade>Configuration/Azure/M3...</Cell>
              </tr>
            </tbody>
          </DataTable>
        </RuleList>
        <ButtonRow>
          <PushButton>Add...</PushButton>
          <PushButton>Remove</PushButton>
          <PushButton>View/Edit...</PushButton>
        </ButtonRow>
      </PropPanel>
    </PropTabs>
    <ButtonRow $end>
      <PushButton>OK</PushButton>
      <PushButton>Cancel</PushButton>
      <PushButton disabled>Apply</PushButton>
      <PushButton>Help</PushButton>
    </ButtonRow>
  </PropsWindow>
);

export default function App() {
  return (
    <Desktop>
      <Global />
      <ConsoleTitle><AppLogo />Active Roles Console</ConsoleTitle>
      <Menu logo items={["File", "Action", "View", "Window", "Help"]} $gap={15} $height={22} $inset={2} />
      <ToolBar>
        {tools.map((t, i) =>
          t ? <ToolButton key={i} aria-label={t[0]} $active={t[2]}>{t[1]}</ToolButton> : <ToolDivider key={i} />
        )}
      </ToolBar>
      <ToolEdge />
      <Workspace>
        <TreePane>
          {tree.map(([depth, label, Glyph, open, selected]) => (
            <TreeRow key={label} $depth={depth}>
              {depth > 0 && (
                <TreeSlot>
                  {open && <Chevron dir={open} color={open === "down" ? "#404040" : "#a6a6a6"} thick={1.6} />}
                </TreeSlot>
              )}
              <TreeItem $selected={selected}><Glyph />{label}</TreeItem>
            </TreeRow>
          ))}
        </TreePane>
        <Splitter />
        <ResultPane>
          <ResultTop />
          <ResultBand />
        </ResultPane>
      </Workspace>
      <PropsDialog />
      <RuleDialog />
    </Desktop>
  );
}
